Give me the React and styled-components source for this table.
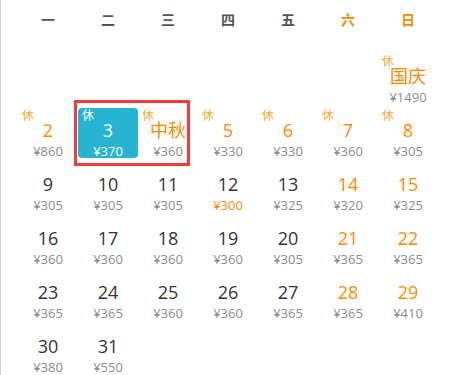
import React from 'react';
import styled, { createGlobalStyle } from 'styled-components';

const Global = createGlobalStyle`
    html, body {
        margin: 0;
        padding: 0;
        background: #fff;
    }
    body {
        font-family: "Open Sans", "Noto Sans CJK SC", sans-serif;
    }
`;

const Calendar = styled.div`
    width: 456px;
    height: 375px;
    box-sizing: border-box;
    border-left: 1px solid #d4d4d4;
    padding-left: 17px;
    overflow: hidden;
`;

const WeekHeader = styled.div`
    display: grid;
    grid-template-columns: repeat(7, 60px);
    height: 40px;
`;

const WeekDay = styled.div`
    text-align: center;
    line-height: 40px;
    font-size: 14px;
    font-weight: bold;
    color: ${props => props.weekend ? '#ff8a00' : '#555'};
`;

const DaysGrid = styled.div`
    display: grid;
    grid-template-columns: repeat(7, 60px);
    grid-auto-rows: 50px;
    row-gap: 4px;
    margin-top: 14px;
`;

const DayCell = styled.div`
    position: relative;
    display: flex;
    flex-direction: column;
    align-items: center;
    padding-top: 11px;
    box-sizing: border-box;
    border-radius: 4px;
    background: ${props => props.selected ? '#27b3d2' : 'transparent'};
`;

const Rest = styled.span`
    position: absolute;
    left: 4px;
    top: 1px;
    font-size: 12px;
    line-height: 14px;
    color: ${props => props.selected ? '#fff' : '#ffa733'};
`;

const DayNum = styled.span`
    font-size: 18px;
    line-height: 22px;
    color: ${props => props.selected ? '#fff' : props.orange ? '#ff8a00' : '#333'};
`;

const Festival = styled.span`
    font-size: 18px;
    line-height: 22px;
    color: #ff8a00;
`;

const Price = styled.span`
    font-size: 13px;
    line-height: 18px;
    margin-top: 1px;
    color: ${props => props.selected ? '#fff' : props.low ? '#ff8a00' : '#8c8c8c'};
`;

const Highlight = styled.div`
    position: absolute;
    left: -4px;
    top: -8px;
    width: 116px;
    height: 66px;
    box-sizing: border-box;
    border: 3px solid #f33b3b;
    pointer-events: none;
    z-index: 2;
`;

const weekdays = ['一', '二', '三', '四', '五', '六', '日'];

const days = [
    null, null, null, null, null, null,
    { label: '国庆', price: 1490, rest: true },
    { day: 2, price: 860, rest: true, orange: true },
    { day: 3, price: 370, rest: true, selected: true },
    { label: '中秋', price: 360, rest: true },
    { day: 5, price: 330, rest: true, orange: true },
    { day: 6, price: 330, rest: true, orange: true },
    { day: 7, price: 360, rest: true, orange: true },
    { day: 8, price: 305, rest: true, orange: true },
    { day: 9, price: 305 },
    { day: 10, price: 305 },
    { day: 11, price: 305 },
    { day: 12, price: 300, low: true },
    { day: 13, price: 325 },
    { day: 14, price: 320, orange: true },
    { day: 15, price: 325, orange: true },
    { day: 16, price: 360 },
    { day: 17, price: 360 },
    { day: 18, price: 360 },
    { day: 19, price: 360 },
    { day: 20, price: 305 },
    { day: 21, price: 365, orange: true },
    { day: 22, price: 365, orange: true },
    { day: 23, price: 365 },
    { day: 24, price: 365 },
    { day: 25, price: 360 },
    { day: 26, price: 360 },
    { day: 27, price: 365 },
    { day: 28, price: 365, orange: true },
    { day: 29, price: 410, orange: true },
    { day: 30, price: 380 },
    { day: 31, price: 550 },
];

export default function App() {
    return (
        <>
            <Global />
            <Calendar>
                <WeekHeader>
                    {weekdays.map((w, i) => (
                        <WeekDay key={w} weekend={i > 4}>{w}</WeekDay>
                    ))}
                </WeekHeader>
                <DaysGrid>
                    {days.map((d, i) => {
                        if (!d) return <DayCell key={i} />;
                        return (
                            <DayCell key={i} selected={d.selected}>
                                {d.selected && <Highlight />}
                                {d.rest && <Rest selected={d.selected}>休</Rest>}
                                {d.label
                                    ? <Festival>{d.label}</Festival>
                                    : <DayNum orange={d.orange} selected={d.selected}>{d.day}</DayNum>}
                                <Price low={d.low} selected={d.selected}>¥{d.price}</Price>
                            </DayCell>
                        );
                    })}
                </DaysGrid>
            </Calendar>
        </>
    );
}
